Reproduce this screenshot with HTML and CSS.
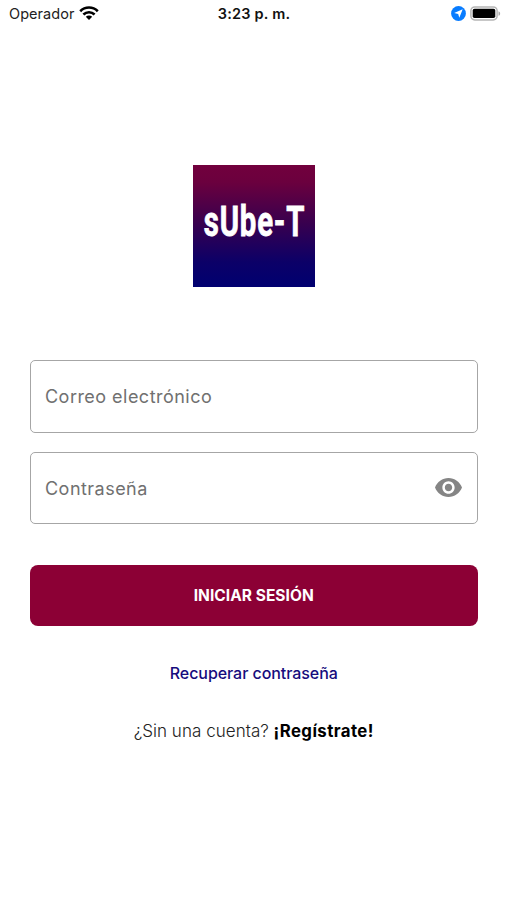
FILE: index.html
```html
<!DOCTYPE html>
<html lang="es">
<head>
<meta charset="utf-8">
<title>sUbe-T</title>
<link rel="stylesheet" href="styles.css">
</head>
<body>
<header class="status">
  <div class="carrier"><span class="operator">Operador</span>
    <svg class="wifi" width="20" height="14" viewBox="0 0 20 14"><g fill="none" stroke="#000" stroke-width="2.6"><path d="M1.2 5.2C6.2.3 13.8.3 18.8 5.2"/><path d="M4.4 8.5c3.2-3.1 8-3.1 11.2 0"/></g><path d="M6.8 10.7c1.8-1.7 4.6-1.7 6.4 0L10 13.9z"/></svg>
  </div>
  <time class="clock">3:23 p. m.</time>
  <div class="indicators">
    <svg width="15" height="15" viewBox="0 0 15 15"><circle cx="7.5" cy="7.5" r="7.4" fill="#087cff"/><path d="M11.7 3.3 8.3 11.7 7.2 7.9 3.2 7z" fill="#fff"/></svg>
    <svg width="31" height="15" viewBox="0 0 31 15"><rect x=".9" y=".9" width="26.2" height="13" rx="3.8" fill="#fff" stroke="#b5b5b5" stroke-width="1.5"/><rect x="2.7" y="2.7" width="22.6" height="9.4" rx="1.8"/><path d="M28.5 5.2c2.2.8 2.2 3.8 0 4.6z" fill="#a8a8a8"/></svg>
  </div>
</header>
<main class="login">
  <div class="logo"><span class="wordmark">sUbe-T</span></div>
  <div class="field"><span class="label email">Correo electrónico</span></div>
  <div class="field"><span class="label password">Contraseña</span>
    <svg class="eye" width="27" height="19" viewBox="1 4.5 22 15" preserveAspectRatio="none"><path fill="#858585" d="M12 4.5C7 4.5 2.73 7.61 1 12c1.73 4.39 6 7.5 11 7.5s9.27-3.11 11-7.5c-1.73-4.39-6-7.5-11-7.5zM12 17c-2.76 0-5-2.24-5-5s2.24-5 5-5 5 2.24 5 5-2.24 5-5 5zm0-8c-1.66 0-3 1.34-3 3s1.34 3 3 3 3-1.34 3-3-1.34-3-3-3z"/></svg>
  </div>
  <button class="submit"><span class="submit-text">INICIAR SESIÓN</span></button>
  <a class="recover">Recuperar contraseña</a>
  <p class="signup"><span class="question">¿Sin una cuenta?</span> <b class="register">¡Regístrate!</b></p>
</main>
</body>
</html>
```

FILE: styles.css
```css
* { box-sizing: border-box; }
body { margin: 0; width: 507px; height: 900px; background: #fff; color: #111; font-family: Inter, sans-serif; overflow: hidden; }
svg { display: block; flex: none; }
.status { height: 28px; padding: 0 6px 0 9px; display: grid; grid-template-columns: 1fr auto 1fr; align-items: center; font-size: 15px; line-height: 28px; }
.carrier { display: flex; align-items: center; gap: 5px; }
.operator { font-size: 14.5px; letter-spacing: .05px; color: #222; }
.wifi { margin-top: -2px; }
.clock { margin-right: 2px; font-weight: 600; font-size: 14.5px; letter-spacing: .2px; }
.indicators { display: flex; justify-content: flex-end; align-items: center; gap: 4px; margin-top: -1px; }
.login { padding: 137px 29.5px 0 30px; display: flex; flex-direction: column; align-items: center; }
.logo { width: 122px; height: 122px; margin-bottom: 73px; display: flex; align-items: center; justify-content: center; background: linear-gradient(#72003d 0, #6b003e 14%, #38004f 48%, #0b0068 80%, #000070 100%); }
.wordmark { font: bold 42.5px/60px Roboto, sans-serif; color: #fff; letter-spacing: 1.2px; margin: -8px -2px 0 0; transform: scaleX(.69); -webkit-text-stroke: .8px #fff; white-space: nowrap; }
.field { width: 100%; height: 72.5px; margin-bottom: 19.3px; padding: 0 15px 0 14px; border: 1.5px solid #a6a6a6; border-radius: 5px; display: flex; align-items: center; justify-content: space-between; font-size: 18px; letter-spacing: .47px; color: #707070; }
.eye { margin-top: -1px; }
.submit { width: 100%; height: 61px; margin-top: 21.7px; padding: 1px 0 0; border: 0; border-radius: 8px; background: #8c0035; color: #fff; font: 700 15.5px/60px Inter, sans-serif; }
.submit-text { letter-spacing: .03px; }
.recover { margin-top: 33px; font-weight: 500; font-size: 16px; line-height: 28px; letter-spacing: -.06px; color: #160c7d; }
.signup { margin: 30px 0 0; font-size: 17px; line-height: 28px; white-space: nowrap; }
.question { font-weight: 300; letter-spacing: .04px; color: #222; }
.register { font-weight: 700; font-size: 16.8px; letter-spacing: .42px; color: #000; }
```
